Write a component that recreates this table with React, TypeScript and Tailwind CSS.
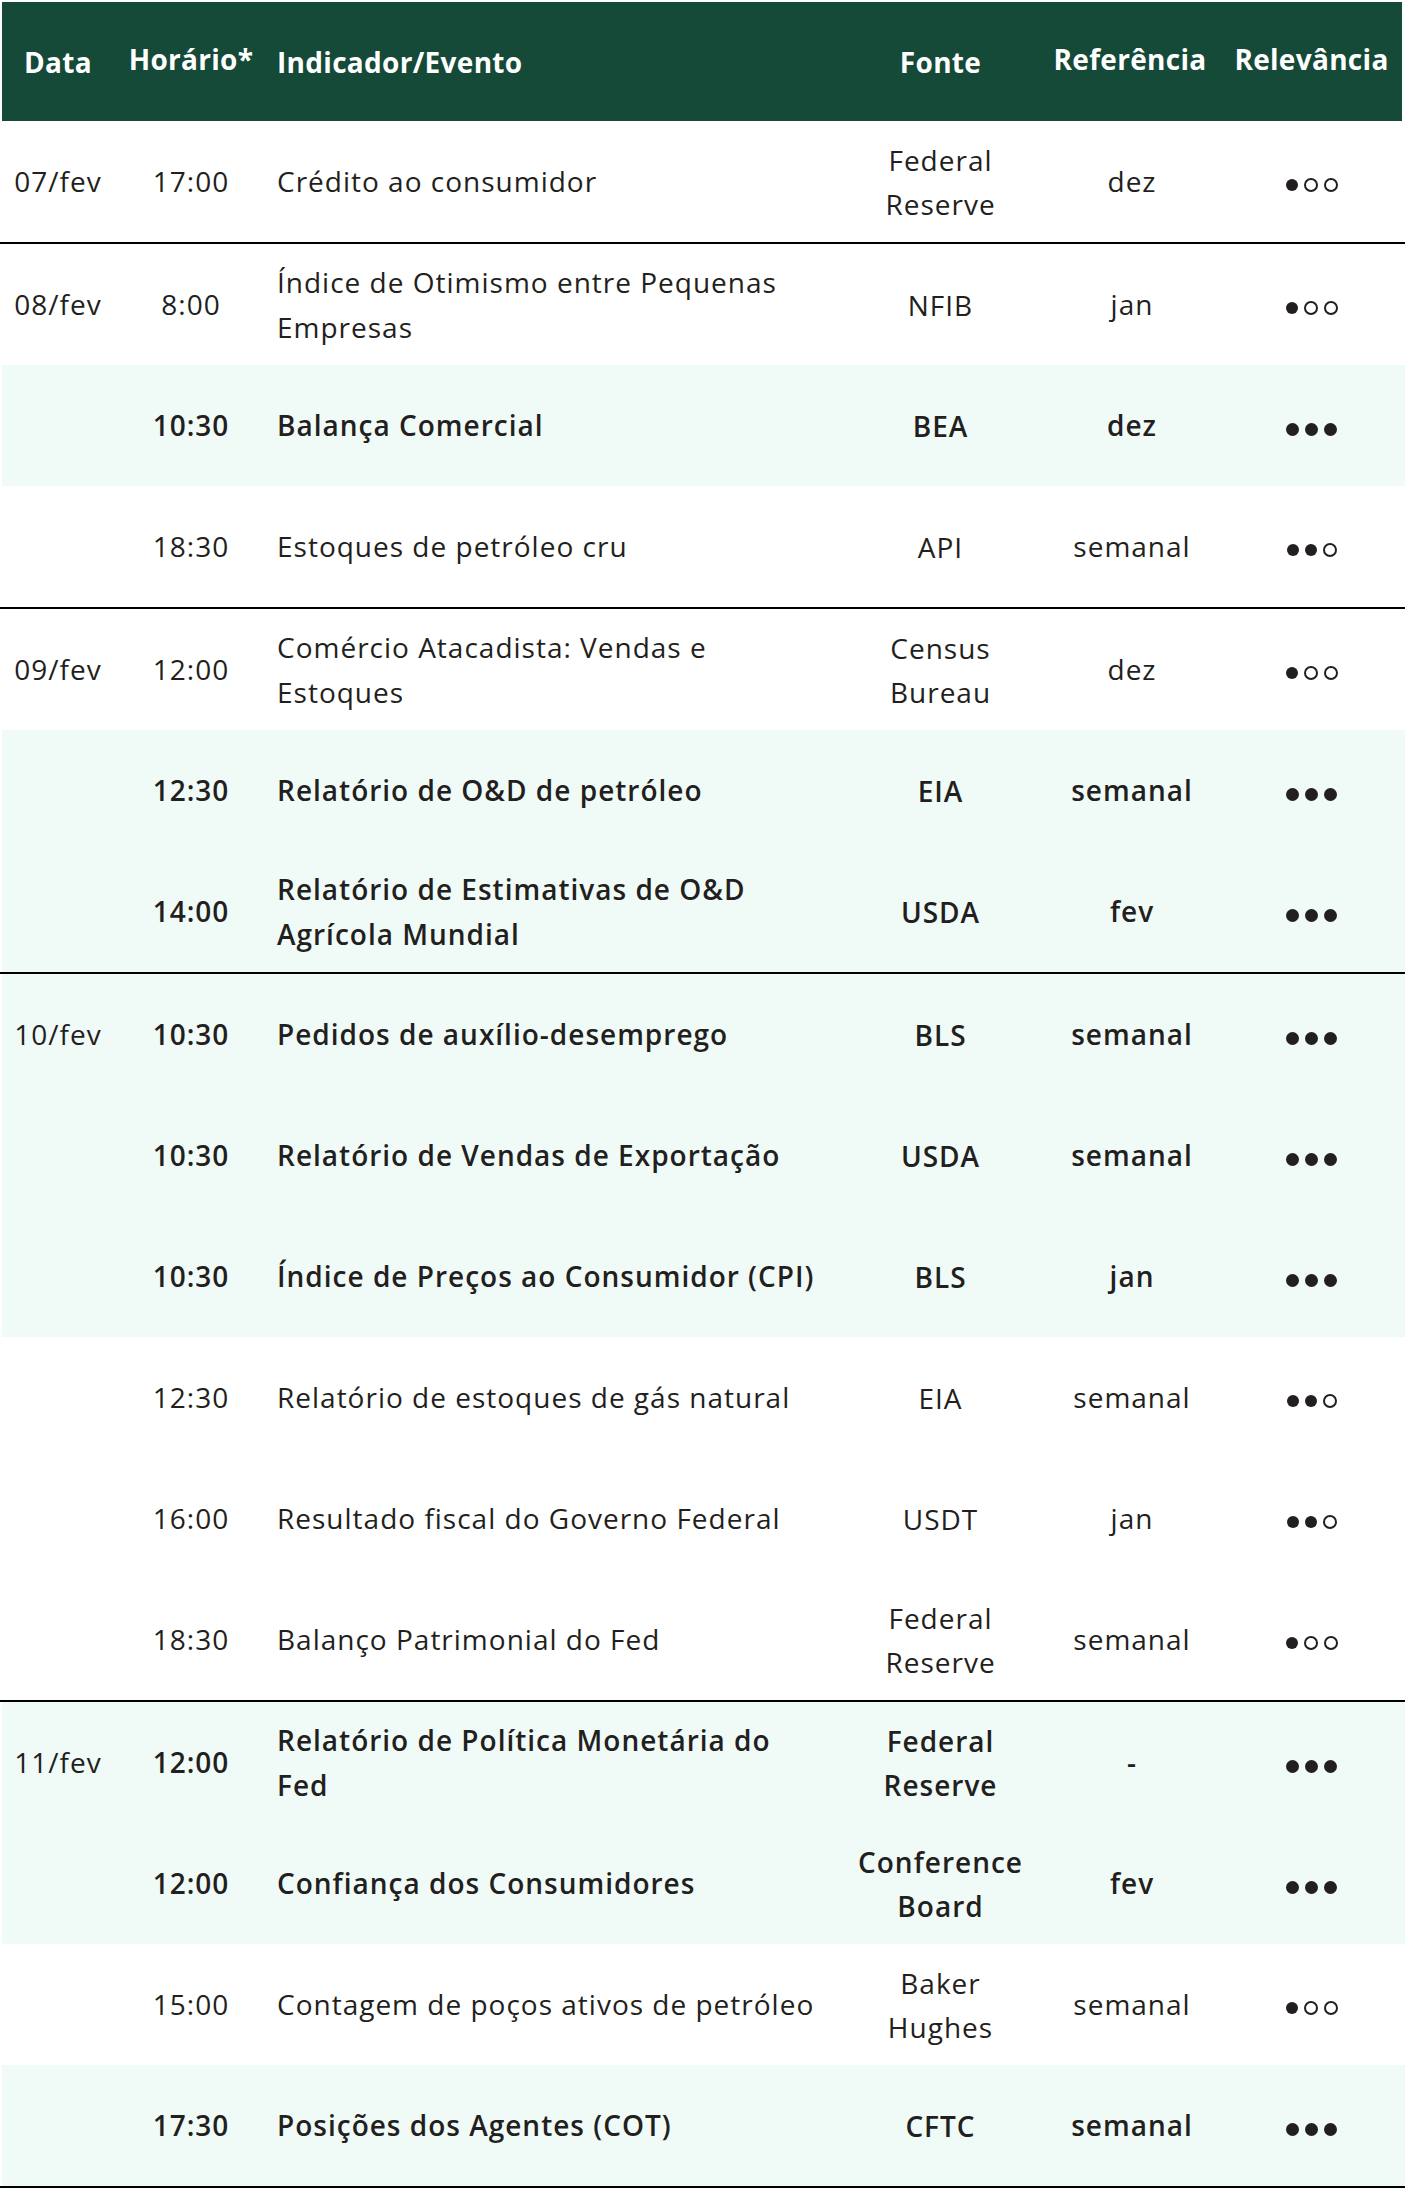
import React from "react";

type Row = {
  date?: string;
  time: string;
  ev: string[];
  src: string[];
  ref: string;
  rel: number;
  bold?: boolean;
  line?: boolean;
};

const rows: Row[] = [
  { date: "07/fev", time: "17:00", ev: ["Crédito ao consumidor"], src: ["Federal", "Reserve"], ref: "dez", rel: 1, line: true },
  { date: "08/fev", time: "8:00", ev: ["Índice de Otimismo entre Pequenas", "Empresas"], src: ["NFIB"], ref: "jan", rel: 1 },
  { time: "10:30", ev: ["Balança Comercial"], src: ["BEA"], ref: "dez", rel: 3, bold: true },
  { time: "18:30", ev: ["Estoques de petróleo cru"], src: ["API"], ref: "semanal", rel: 2, line: true },
  { date: "09/fev", time: "12:00", ev: ["Comércio Atacadista: Vendas e", "Estoques"], src: ["Census", "Bureau"], ref: "dez", rel: 1 },
  { time: "12:30", ev: ["Relatório de O&D de petróleo"], src: ["EIA"], ref: "semanal", rel: 3, bold: true },
  { time: "14:00", ev: ["Relatório de Estimativas de O&D", "Agrícola Mundial"], src: ["USDA"], ref: "fev", rel: 3, bold: true, line: true },
  { date: "10/fev", time: "10:30", ev: ["Pedidos de auxílio-desemprego"], src: ["BLS"], ref: "semanal", rel: 3, bold: true },
  { time: "10:30", ev: ["Relatório de Vendas de Exportação"], src: ["USDA"], ref: "semanal", rel: 3, bold: true },
  { time: "10:30", ev: ["Índice de Preços ao Consumidor (CPI)"], src: ["BLS"], ref: "jan", rel: 3, bold: true },
  { time: "12:30", ev: ["Relatório de estoques de gás natural"], src: ["EIA"], ref: "semanal", rel: 2 },
  { time: "16:00", ev: ["Resultado fiscal do Governo Federal"], src: ["USDT"], ref: "jan", rel: 2 },
  { time: "18:30", ev: ["Balanço Patrimonial do Fed"], src: ["Federal", "Reserve"], ref: "semanal", rel: 1, line: true },
  { date: "11/fev", time: "12:00", ev: ["Relatório de Política Monetária do", "Fed"], src: ["Federal", "Reserve"], ref: "-", rel: 3, bold: true },
  { time: "12:00", ev: ["Confiança dos Consumidores"], src: ["Conference", "Board"], ref: "fev", rel: 3, bold: true },
  { time: "15:00", ev: ["Contagem de poços ativos de petróleo"], src: ["Baker", "Hughes"], ref: "semanal", rel: 1 },
  { time: "17:30", ev: ["Posições dos Agentes (COT)"], src: ["CFTC"], ref: "semanal", rel: 3, bold: true, line: true },
];

const GRID = "grid grid-cols-[112px_154px_567px_211px_172px_187px]";

function Dots({ n, bold }: { n: number; bold?: boolean }) {
  const items = [0, 1, 2];
  return (
    <div className="flex items-center justify-center gap-[6px] pt-[7px]">
      {items.map((i) =>
        i < n ? (
          <span
            key={i}
            className={bold ? "block w-[13px] h-[13px] rounded-full bg-[#231f20]" : "block w-[12px] h-[12px] rounded-full bg-[#231f20]"}
          />
        ) : (
          <span key={i} className="block w-[14px] h-[14px] rounded-full border-2 border-[#231f20]" />
        )
      )}
    </div>
  );
}

export default function App() {
  return (
    <div
      className="w-[1405px] bg-white pt-[2px] text-[#231f20] text-[28px] tracking-[1px]"
      style={{ fontFamily: "'Open Sans', Lato, sans-serif" }}
    >
      <div className={`${GRID} ml-[2px] mr-[3px] h-[119px] bg-[#144a37] text-white font-bold items-center tracking-[0.3px]`}>
        <div className="text-center">Data</div>
        <div className="text-center pb-[6px] whitespace-nowrap">Horário*</div>
        <div className="pl-[9px]">Indicador/Evento</div>
        <div className="text-center">Fonte</div>
        <div className="text-center pb-[6px] -ml-[4px] whitespace-nowrap">Referência</div>
        <div className="text-center pb-[6px] whitespace-nowrap">Relevância</div>
      </div>
      {rows.map((r, idx) => (
        <div key={idx} className={r.line ? "border-b-2 border-black" : ""}>
          <div
            className={`${GRID} ml-[2px] h-[121px] items-center leading-[45px] ${r.bold ? "bg-[#f0fbf8]" : "bg-white"}`}
          >
            <div className="text-center font-normal">{r.date ?? ""}</div>
            <div className={`text-center ${r.bold ? "font-semibold" : ""}`}>{r.time}</div>
            <div className={`pl-[9px] whitespace-nowrap ${r.bold ? "font-semibold" : ""}`}>
              {r.ev.map((l, i) => (
                <div key={i}>{l}</div>
              ))}
            </div>
            <div className={`text-center whitespace-nowrap leading-[44px] ${r.bold ? "font-semibold" : ""}`}>
              {r.src.map((l, i) => (
                <div key={i}>{l}</div>
              ))}
            </div>
            <div className={`text-center ${r.bold ? "font-semibold" : ""}`}>{r.ref}</div>
            <Dots n={r.rel} bold={r.bold} />
          </div>
        </div>
      ))}
    </div>
  );
}
